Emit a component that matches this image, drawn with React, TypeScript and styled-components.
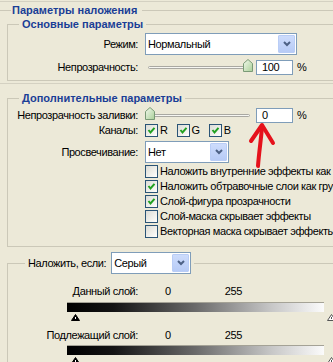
import React from "react";
import styled, { createGlobalStyle } from "styled-components";

const GlobalStyle = createGlobalStyle`
  html, body { margin: 0; padding: 0; background: #ece9d8; }
  body {
    font-family: "Liberation Sans", Arial, sans-serif;
    font-size: 11px;
    letter-spacing: -0.4px;
    color: #000;
  }
`;

const Root = styled.div`
  position: relative;
  width: 333px;
  height: 362px;
  overflow: hidden;
  background: #ece9d8;
`;

const Rule = styled.div<{ $top: number }>`
  margin-top: ${(p) => p.$top}px;
  height: 0;
  border-top: 1px solid #d4d1c2;
`;

const SectionTitle = styled.div`
  display: flex;
  align-items: center;
  height: 13px;
  margin-top: 2px;
  font-weight: bold;
  letter-spacing: 0;
  color: #1a3e96;
  line-height: 13px;
  white-space: nowrap;
  &::before {
    content: "";
    width: 11px;
    border-top: 1px solid #cbc8b8;
    margin-right: 1px;
  }
  &::after {
    content: "";
    flex: 1;
    border-top: 1px solid #cbc8b8;
    margin-left: 5px;
  }
`;

const Group = styled.fieldset<{ $top: number; $pb: number }>`
  margin: ${(p) => p.$top}px 0 0 7px;
  padding: 0 0 ${(p) => p.$pb}px 0;
  border: 1px solid #cbc8b8;
  border-right: none;
  min-width: 0;
`;

const Legend = styled.legend<{ $indent: number; $plain?: boolean }>`
  margin-left: ${(p) => p.$indent}px;
  padding: 0 3px;
  line-height: 13px;
  white-space: nowrap;
  font-weight: ${(p) => (p.$plain ? "normal" : "bold")};
  letter-spacing: ${(p) => (p.$plain ? "-0.4px" : "0")};
  color: ${(p) => (p.$plain ? "#000" : "#1a3e96")};
`;

const LegendInner = styled.div`
  display: flex;
  align-items: center;
  gap: 5px;
`;

const Row = styled.div<{ $top: number; $h: number }>`
  display: grid;
  grid-template-columns: 130px auto;
  column-gap: 7px;
  align-items: center;
  margin-top: ${(p) => p.$top}px;
  height: ${(p) => p.$h}px;
`;

const Label = styled.span`
  text-align: right;
  white-space: nowrap;
  line-height: 13px;
`;

const SelectBox = styled.div<{ $w: number }>`
  box-sizing: border-box;
  width: ${(p) => p.$w}px;
  height: 22px;
  border: 1px solid #7f9db9;
  background: #fff;
  display: flex;
  align-items: center;
  padding-left: 2px;
  white-space: nowrap;
`;

const SelectText = styled.span`
  flex: 1;
  line-height: 13px;
`;

const DropButton = styled.span`
  box-sizing: border-box;
  width: 17px;
  height: 18px;
  margin-right: 1px;
  border: 1px solid #b9cdf6;
  border-radius: 1px;
  background: linear-gradient(180deg, #cddcfc 0%, #b7cbf6 100%);
  display: flex;
  align-items: center;
  justify-content: center;
`;

const Controls = styled.div`
  display: flex;
  align-items: center;
`;

const SliderBox = styled.div`
  position: relative;
  width: 108px;
  height: 15px;
`;

const Track = styled.div`
  position: absolute;
  left: 3px;
  right: 3px;
  top: 6px;
  height: 1px;
  border: 1px solid #a9a8a2;
  border-radius: 2px;
  background: #f6f6f2;
`;

const ThumbSvg = styled.svg`
  position: absolute;
  top: -1px;
`;

const NumBox = styled.div`
  box-sizing: border-box;
  width: 37px;
  height: 15px;
  margin-left: 3px;
  border: 1px solid #7f9db9;
  background: #fff;
  padding-left: 5px;
  line-height: 13px;
`;

const Percent = styled.span`
  margin-left: 4px;
  line-height: 13px;
`;

const Channels = styled.div`
  display: flex;
  align-items: center;
  gap: 9px;
`;

const CheckItem = styled.label`
  display: flex;
  align-items: center;
  gap: 2px;
  white-space: nowrap;
  line-height: 13px;
`;

const Box = styled.span`
  box-sizing: border-box;
  width: 13px;
  height: 13px;
  border: 1px solid #2a5476;
  background: linear-gradient(135deg, #dcdcd6 0%, #f4f4f0 70%, #ffffff 100%);
  display: inline-flex;
  align-items: center;
  justify-content: center;
  flex: none;
`;

const LevelRow = styled.div<{ $top: number }>`
  display: flex;
  align-items: center;
  height: 13px;
  margin-top: ${(p) => p.$top}px;
  line-height: 13px;
  white-space: nowrap;
`;

const LevelLabel = styled.span`
  width: 130px;
  text-align: right;
`;

const Num = styled.span<{ $ml: number }>`
  margin-left: ${(p) => p.$ml}px;
`;

const GradientBar = styled.div<{ $top: number }>`
  box-sizing: border-box;
  margin: ${(p) => p.$top}px 0 0 59px;
  width: 257px;
  height: 10px;
  border-top: 1px solid #a4a296;
  background: linear-gradient(90deg, #000 0%, #141414 18%, #6a6a6a 50%, #c8c8c8 80%, #fbfbfb 100%);
`;

const ThumbRow = styled.div`
  display: flex;
  justify-content: space-between;
  margin: 2px 0 0 63px;
  width: 265px;
  height: 7px;
`;

const ArrowOverlay = styled.svg`
  position: absolute;
  left: 244px;
  top: 118px;
`;

const Chevron = () => (
  <svg width="8" height="6" viewBox="0 0 8 6">
    <polyline points="1,1 4,4 7,1" fill="none" stroke="#4d6185" strokeWidth="2" />
  </svg>
);

const Select = ({ w, value }: { w: number; value: string }) => (
  <SelectBox $w={w}>
    <SelectText>{value}</SelectText>
    <DropButton>
      <Chevron />
    </DropButton>
  </SelectBox>
);

const Slider = ({ value }: { value: number }) => (
  <SliderBox>
    <Track />
    <ThumbSvg width="10" height="13" viewBox="0 0 10 13" style={{ left: (value / 100) * 98 }}>
      <defs>
        <linearGradient id={`tg${value}`} x1="0" y1="0" x2="1" y2="1">
          <stop offset="0" stopColor="#f4faee" />
          <stop offset="1" stopColor="#a9cf98" />
        </linearGradient>
      </defs>
      <path d="M0.5 4.5 L5 0.5 L9.5 4.5 L9.5 12.5 L0.5 12.5 Z" fill={`url(#tg${value})`} stroke="#7a9a76" />
    </ThumbSvg>
  </SliderBox>
);

const CheckBox = ({ checked }: { checked: boolean }) => (
  <Box>
    {checked && (
      <svg width="9" height="9" viewBox="0 0 9 9">
        <polyline points="1.5,4 3.5,6.5 7.5,1.8" fill="none" stroke="#21a121" strokeWidth="2" />
      </svg>
    )}
  </Box>
);

const BlackThumb = () => (
  <svg width="9" height="7" viewBox="0 0 9 7">
    <path d="M4.5 0.5 L8.5 6.5 L0.5 6.5 Z" fill="#000" stroke="#000" />
    <rect x="4" y="3" width="1" height="2" fill="#fff" />
  </svg>
);

const WhiteThumb = () => (
  <svg width="9" height="7" viewBox="0 0 9 7">
    <path d="M4.5 0.5 L8.5 6.5 L0.5 6.5 Z" fill="#fff" stroke="#555" />
    <rect x="4" y="3" width="1" height="2" fill="#555" />
  </svg>
);

const options = [
  { text: "Наложить внутренние эффекты как группу", checked: false },
  { text: "Наложить обтравочные слои как группу", checked: true },
  { text: "Слой-фигура прозрачности", checked: true },
  { text: "Слой-маска скрывает эффекты", checked: false },
  { text: "Векторная маска скрывает эффекты", checked: false },
];

export default function App() {
  return (
    <Root>
      <GlobalStyle />
      <Rule $top={1} />
      <SectionTitle>Параметры наложения</SectionTitle>

      <Group $top={1} $pb={5}>
        <Legend $indent={11}>Основные параметры</Legend>
        <Row $top={2} $h={22}>
          <Label>Режим:</Label>
          <Select w={152} value="Нормальный" />
        </Row>
        <Row $top={5} $h={15}>
          <Label>Непрозрачность:</Label>
          <Controls>
            <Slider value={100} />
            <NumBox>100</NumBox>
            <Percent>%</Percent>
          </Controls>
        </Row>
      </Group>

      <Rule $top={2} />

      <Group $top={8} $pb={8}>
        <Legend $indent={11}>Дополнительные параметры</Legend>
        <Row $top={3} $h={15}>
          <Label>Непрозрачность заливки:</Label>
          <Controls>
            <Slider value={0} />
            <NumBox>0</NumBox>
            <Percent>%</Percent>
          </Controls>
        </Row>
        <Row $top={1} $h={13}>
          <Label>Каналы:</Label>
          <Channels>
            <CheckItem>
              <CheckBox checked />R
            </CheckItem>
            <CheckItem>
              <CheckBox checked />G
            </CheckItem>
            <CheckItem>
              <CheckBox checked />B
            </CheckItem>
          </Channels>
        </Row>
        <Row $top={4} $h={22}>
          <Label>Просвечивание:</Label>
          <Select w={84} value="Нет" />
        </Row>
        {options.map((o) => (
          <Row key={o.text} $top={2} $h={13}>
            <span />
            <CheckItem>
              <CheckBox checked={o.checked} />
              {o.text}
            </CheckItem>
          </Row>
        ))}
      </Group>

      <Group $top={5} $pb={0}>
        <Legend $indent={17} $plain>
          <LegendInner>
            <span>Наложить, если:</span>
            <Select w={80} value="Серый" />
          </LegendInner>
        </Legend>
        <LevelRow $top={11}>
          <LevelLabel>Данный слой:</LevelLabel>
          <Num $ml={27}>0</Num>
          <Num $ml={54}>255</Num>
        </LevelRow>
        <GradientBar $top={4} />
        <ThumbRow>
          <BlackThumb />
          <WhiteThumb />
        </ThumbRow>
        <LevelRow $top={8}>
          <LevelLabel>Подлежащий слой:</LevelLabel>
          <Num $ml={27}>0</Num>
          <Num $ml={54}>255</Num>
        </LevelRow>
        <GradientBar $top={3} />
        <ThumbRow>
          <BlackThumb />
          <WhiteThumb />
        </ThumbRow>
      </Group>

      <ArrowOverlay width="36" height="52" viewBox="244 118 36 52">
        <path d="M258 166 C259 152 261 140 262 127" fill="none" stroke="#e5121c" strokeWidth="4" strokeLinecap="round" />
        <path d="M251 141 L262 125 L273 143" fill="none" stroke="#e5121c" strokeWidth="4" strokeLinecap="round" strokeLinejoin="round" />
      </ArrowOverlay>
    </Root>
  );
}
